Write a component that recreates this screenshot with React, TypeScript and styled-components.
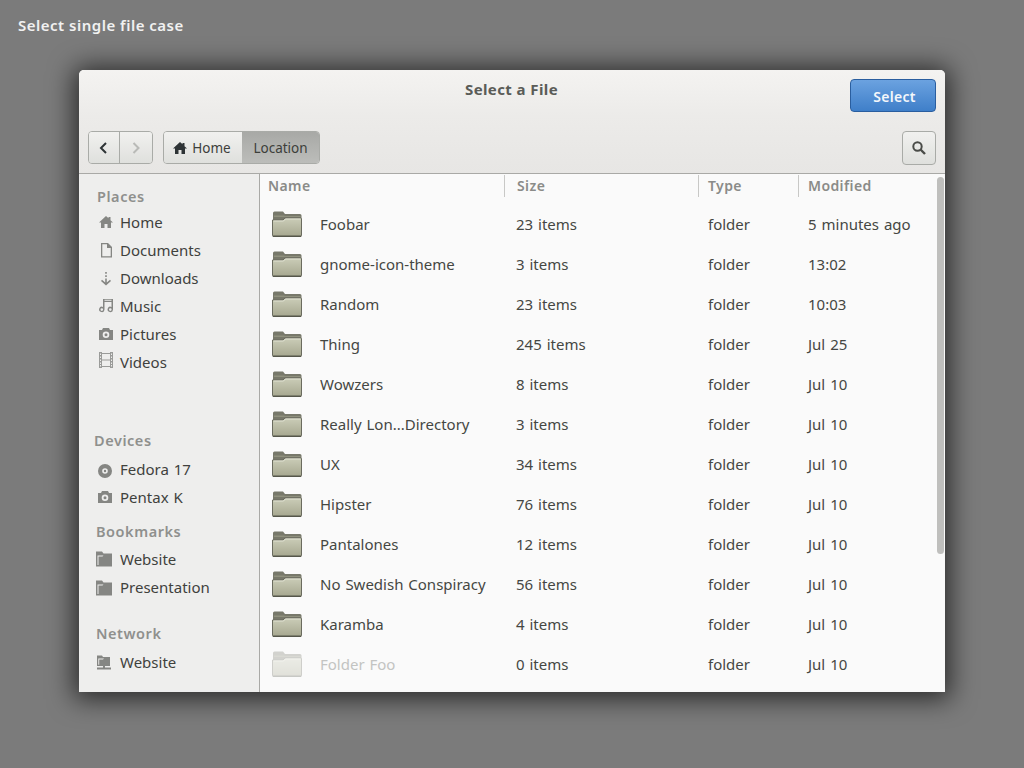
import React from "react";
import styled, { createGlobalStyle } from "styled-components";

const Global = createGlobalStyle`
  html, body { margin: 0; padding: 0; background: #7b7b7b; }
  body { font-family: "Noto Sans", "Open Sans", sans-serif; }
`;

const Page = styled.div`
  width: 1024px;
  height: 768px;
  overflow: hidden;
  background: #7b7b7b;
  box-sizing: border-box;
  padding: 14px 79px 0;
`;

const Caption = styled.div`
  margin-left: -61px;
  height: 56px;
  line-height: 22px;
  font-size: 15px;
  font-weight: 600;
  letter-spacing: 0.5px;
  color: #f1f1f1;
`;

const Window = styled.div`
  width: 866px;
  height: 622px;
  box-sizing: border-box;
  border-radius: 5px 5px 0 0;
  overflow: hidden;
  background: #fafafa;
  box-shadow: 0 2px 26px 5px rgba(0, 0, 0, 0.66), 0 0 0 1px rgba(125, 125, 125, 0.8);
  display: flex;
  flex-direction: column;
`;

const Header = styled.div`
  height: 104px;
  flex: none;
  box-sizing: border-box;
  border-bottom: 1px solid #a9a9a6;
  background: linear-gradient(#f4f3f1, #ecebe9 45%, #e7e6e4);
  display: flex;
  flex-direction: column;
  padding: 9px 9px 0;
`;

const TitleRow = styled.div`
  height: 52px;
  display: flex;
  justify-content: flex-end;
  position: relative;
`;

const Title = styled.div`
  position: absolute;
  left: 0;
  right: 0;
  top: -1px;
  text-align: center;
  font-size: 15px;
  line-height: 22px;
  font-weight: 700;
  letter-spacing: 0.4px;
  color: #5a5c58;
  padding-right: 1px;
`;

const SelectButton = styled.div`
  width: 86px;
  height: 33px;
  box-sizing: border-box;
  border: 1px solid #2a5e9f;
  border-radius: 4px;
  background: linear-gradient(#6ba2e0, #3f7fc9);
  color: #f4f7fb;
  font-size: 14px;
  font-weight: 600;
  letter-spacing: 0.3px;
  line-height: 33px;
  text-align: center;
  padding-left: 3px;
`;

const ToolRow = styled.div`
  display: flex;
  align-items: flex-start;
`;

const ButtonGroup = styled.div<{ $gap?: number }>`
  display: flex;
  height: 33px;
  box-sizing: border-box;
  border: 1px solid #a9aba7;
  border-radius: 4px;
  overflow: hidden;
  margin-right: ${(p) => p.$gap ?? 0}px;
`;

const ToolButton = styled.div<{ $w: number; $divider?: boolean }>`
  width: ${(p) => p.$w}px;
  height: 100%;
  display: flex;
  align-items: center;
  justify-content: center;
  background: linear-gradient(#f1f1ef, #dfe0dd);
  border-left: ${(p) => (p.$divider ? "1px solid #a9aba7" : "none")};
`;

const Crumb = styled.div<{ $active?: boolean; $w: number; $shift?: number }>`
  width: ${(p) => p.$w}px;
  height: 100%;
  box-sizing: border-box;
  display: flex;
  align-items: center;
  justify-content: center;
  gap: 4px;
  padding-right: ${(p) => p.$shift ?? 0}px;
  font-size: 13.5px;
  color: #3d3f3b;
  background: ${(p) =>
    p.$active
      ? "linear-gradient(#a8a9a6, #bcbdba)"
      : "linear-gradient(#f1f1ef, #dfe0dd)"};
`;

const Spacer = styled.div`
  flex: 1;
`;

const SearchButton = styled(ButtonGroup)`
  width: 34px;
  align-items: center;
  justify-content: center;
  background: linear-gradient(#f1f1ef, #dfe0dd);
  height: 34px;
`;

const Body = styled.div`
  flex: 1;
  display: flex;
  min-height: 0;
`;

const Sidebar = styled.div`
  width: 181px;
  flex: none;
  box-sizing: border-box;
  background: #eeeeed;
  border-right: 1px solid #a9a9a6;
  padding-top: 10px;
`;

const Section = styled.div<{ $top: number; $left: number }>`
  margin-top: ${(p) => p.$top}px;
  --heading-left: ${(p) => p.$left}px;
`;

const SideHeading = styled.div<{ $after?: number }>`
  height: 24px;
  line-height: 24px;
  margin-left: var(--heading-left);
  margin-bottom: ${(p) => p.$after ?? 0}px;
  font-size: 14.5px;
  font-weight: 600;
  letter-spacing: 0.55px;
  color: #8f908d;
`;

const SideItem = styled.div`
  height: 28px;
  display: flex;
  align-items: center;
  padding-left: 17px;
  font-size: 15px;
  word-spacing: 1px;
  color: #3f413d;
`;

const SideIconSlot = styled.div`
  width: 24px;
  height: 16px;
  flex: none;
`;

const SideIcon = styled.svg<{ $x: number; $y: number }>`
  display: block;
  width: 16px;
  height: 16px;
  margin-left: ${(p) => p.$x}px;
  margin-top: ${(p) => p.$y}px;
  fill: #858683;
`;

const Main = styled.div`
  flex: 1;
  position: relative;
  background: #fafafa;
  min-width: 0;
`;

const HeaderRow = styled.div`
  display: grid;
  grid-template-columns: 245px 194px 100px 1fr;
  height: 30px;
`;

const ColumnHead = styled.div<{ $pad: number; $line?: boolean }>`
  height: 22px;
  margin-top: 1px;
  line-height: 22px;
  box-sizing: border-box;
  padding-left: ${(p) => p.$pad}px;
  border-right: ${(p) => (p.$line ? "1px solid #c8c8c6" : "none")};
  font-size: 14px;
  font-weight: 600;
  letter-spacing: 0.4px;
  color: #8a8b88;
`;

const Row = styled.div`
  display: grid;
  grid-template-columns: 245px 194px 100px 1fr;
  height: 40px;
  align-items: center;
  font-size: 15px;
  word-spacing: 1px;
  color: #454743;
`;

const NameCell = styled.div<{ $faded?: boolean }>`
  display: flex;
  align-items: center;
  padding-left: 12px;
  color: ${(p) => (p.$faded ? "#c3c4c2" : "inherit")};
`;

const FolderIcon = styled.svg<{ $faded?: boolean }>`
  width: 30px;
  height: 27px;
  flex: none;
  margin-right: 18px;
  margin-top: 1px;
  opacity: ${(p) => (p.$faded ? 0.3 : 1)};
`;

const Cell = styled.div<{ $pad: number }>`
  padding-left: ${(p) => p.$pad}px;
`;

const Scrollbar = styled.div`
  position: absolute;
  top: 3px;
  right: 1px;
  width: 7px;
  height: 377px;
  border-radius: 4px;
  background: #bfbfbd;
`;

const Folder = ({ faded, id }: { faded?: boolean; id: string }) => (
  <FolderIcon $faded={faded} viewBox="0 0 30 27">
    <defs>
      <linearGradient id={id} x1="0" y1="0" x2="0" y2="1">
        <stop offset="0" stopColor="#cbcdb8" />
        <stop offset="1" stopColor="#a6a78f" />
      </linearGradient>
    </defs>
    <path d="M1 2 Q1 0.5 2.5 0.5 H11 L13 3 H28 Q29.5 3 29.5 4.5 V9 H1 Z" fill="#77786a" />
    <path d="M2 4.5 H12 L13 5 H28.5 V6 H2 Z" fill="#8f907d" />
    <path d="M0.5 9 H11 L13 7 H28.5 Q29.5 7 29.5 8 V24.5 Q29.5 25.5 28.5 25.5 H1.5 Q0.5 25.5 0.5 24.5 Z" fill={`url(#${id})`} stroke="#6a6b5e" strokeWidth="1" />
    <path d="M1 24.5 H29 V26 H1 Z" fill="#55564a" />
    <path d="M1.5 10 H11.5 L13.5 8 H28.5" stroke="#e0e1d2" strokeWidth="1" fill="none" />
  </FolderIcon>
);

const HOME_PATH = "M8 2 L1 8.5 H3 V14 H6.5 V10 H9.5 V14 H13 V8.5 H15 L12.5 6.2 V3 H10.5 V4.3 Z";

const icons: Record<string, React.ReactNode> = {
  home: <path d={HOME_PATH} />,
  doc: <path fillRule="evenodd" d="M3 1 H10 L14 5 V15.5 H3 Z M4.3 2.3 V14.2 H12.7 V6 H9 V2.3 Z" />,
  download: <path d="M7.2 1 H8.8 V2.8 H7.2 Z M7.2 4.2 H8.8 V6 H7.2 Z M7.2 7.4 H8.8 V11.6 L12 8.8 L13 10 L8 14.6 L3 10 L4 8.8 L7.2 11.6 Z" />,
  music: <path fillRule="evenodd" d="M5 2 H15 V12.5 A2.7 2.7 0 1 1 13.5 10 V5 H6.5 V12.5 A2.7 2.7 0 1 1 5 10 Z M3.8 11.3 A1.3 1.3 0 1 0 3.8 13.9 A1.3 1.3 0 1 0 3.8 11.3 Z M12.3 11.3 A1.3 1.3 0 1 0 12.3 13.9 A1.3 1.3 0 1 0 12.3 11.3 Z M6.5 2.8 V3.8 H13.5 V2.8 Z" />,
  camera: <path fillRule="evenodd" d="M5 2 H11 L12 4 H15 V14 H1 V4 H4 Z M8 5.5 A3.3 3.3 0 1 0 8 12.1 A3.3 3.3 0 1 0 8 5.5 Z M8 7.3 A1.5 1.5 0 1 1 8 10.3 A1.5 1.5 0 1 1 8 7.3 Z" />,
  film: <g opacity="0.8"><path fillRule="evenodd" d="M1 0 H4 V1 H12 V0 H15 V16 H12 V15 H4 V16 H1 Z M2 1.5 V3 H3 V1.5 Z M2 4.5 V6 H3 V4.5 Z M2 7.5 V9 H3 V7.5 Z M2 10.5 V12 H3 V10.5 Z M2 13 V14.5 H3 V13 Z M13 1.5 V3 H14 V1.5 Z M13 4.5 V6 H14 V4.5 Z M13 7.5 V9 H14 V7.5 Z M13 10.5 V12 H14 V10.5 Z M13 13 V14.5 H14 V13 Z M4 2 V7.4 H12 V2 Z M4 8.6 V14 H12 V8.6 Z" /></g>,
  disc: <path fillRule="evenodd" d="M8 1 A7 7 0 1 0 8 15 A7 7 0 1 0 8 1 Z M8 5.2 A2.8 2.8 0 1 1 8 10.8 A2.8 2.8 0 1 1 8 5.2 Z M8 6.8 A1.2 1.2 0 1 0 8 9.2 A1.2 1.2 0 1 0 8 6.8 Z" />,
  folder: <path fillRule="evenodd" d="M0 0.5 H6 L7.5 2.5 H16 V15.5 H0 Z M1.5 4.5 V14 H2.5 V5.5 H6.5 L7.5 4.5 Z" />,
  network: <path fillRule="evenodd" d="M1 0.5 H6 L7 2 H14 V11 H9 V12.5 H15 V14.5 H1 V12.5 H7 V11 H1 Z M2.3 3.5 V9.8 H3.2 V4.6 H7 L8 3.5 Z" />,
};

type Place = [string, string, number, number];

const places: Place[] = [
  ["home", "Home", 2, 0],
  ["doc", "Documents", 2, 0],
  ["download", "Downloads", 2, 1],
  ["music", "Music", 2, -1],
  ["camera", "Pictures", 2, 0],
  ["film", "Videos", 2, -2],
];
const devices: Place[] = [["disc", "Fedora 17", 1, 2], ["camera", "Pentax K", 1, 0]];
const bookmarks: Place[] = [["folder", "Website", 0, 0], ["folder", "Presentation", 0, 1]];
const network: Place[] = [["network", "Website", 0, 1]];

const rows = [
  ["Foobar", "23 items", "5 minutes ago"],
  ["gnome-icon-theme", "3 items", "13:02"],
  ["Random", "23 items", "10:03"],
  ["Thing", "245 items", "Jul 25"],
  ["Wowzers", "8 items", "Jul 10"],
  ["Really Lon...Directory", "3 items", "Jul 10"],
  ["UX", "34 items", "Jul 10"],
  ["Hipster", "76 items", "Jul 10"],
  ["Pantalones", "12 items", "Jul 10"],
  ["No Swedish Conspiracy", "56 items", "Jul 10"],
  ["Karamba", "4 items", "Jul 10"],
  ["Folder Foo", "0 items", "Jul 10"],
];

const items = (list: Place[]) =>
  list.map(([icon, label, x, y]) => (
    <SideItem key={label}>
      <SideIconSlot>
        <SideIcon viewBox="0 0 16 16" $x={x} $y={y}>{icons[icon]}</SideIcon>
      </SideIconSlot>
      {label}
    </SideItem>
  ));

export default function App() {
  return (
    <Page>
      <Global />
      <Caption>Select single file case</Caption>
      <Window>
        <Header>
          <TitleRow>
            <Title>Select a File</Title>
            <SelectButton>Select</SelectButton>
          </TitleRow>
          <ToolRow>
            <ButtonGroup $gap={10}>
              <ToolButton $w={30}>
                <svg width="12" height="14" viewBox="0 0 12 14">
                  <path d="M8 2 L3 7 L8 12" fill="none" stroke="#2e3436" strokeWidth="2" />
                </svg>
              </ToolButton>
              <ToolButton $w={32} $divider>
                <svg width="12" height="14" viewBox="0 0 12 14">
                  <path d="M3.5 2 L8.5 7 L3.5 12" fill="none" stroke="#b9bab7" strokeWidth="2" />
                </svg>
              </ToolButton>
            </ButtonGroup>
            <ButtonGroup>
              <Crumb $w={78} $shift={3}>
                <svg width="16" height="16" viewBox="0 0 16 16" fill="#2e3436">
                  <path d={HOME_PATH} />
                </svg>
                Home
              </Crumb>
              <Crumb $w={77} $active>Location</Crumb>
            </ButtonGroup>
            <Spacer />
            <SearchButton>
              <svg width="16" height="16" viewBox="0 0 16 16">
                <circle cx="6.5" cy="6.5" r="4.2" fill="none" stroke="#4a4c48" strokeWidth="2" />
                <path d="M9.5 9.5 L14 14" stroke="#4a4c48" strokeWidth="2.4" />
              </svg>
            </SearchButton>
          </ToolRow>
        </Header>
        <Body>
          <Sidebar>
            <Section $top={0} $left={18}>
              <SideHeading>Places</SideHeading>
              {items(places)}
            </Section>
            <Section $top={52} $left={15}>
              <SideHeading $after={3}>Devices</SideHeading>
              {items(devices)}
            </Section>
            <Section $top={8} $left={17}>
              <SideHeading $after={2}>Bookmarks</SideHeading>
              {items(bookmarks)}
            </Section>
            <Section $top={20} $left={17}>
              <SideHeading $after={3}>Network</SideHeading>
              {items(network)}
            </Section>
          </Sidebar>
          <Main>
            <HeaderRow>
              <ColumnHead $pad={8} $line>Name</ColumnHead>
              <ColumnHead $pad={12} $line>Size</ColumnHead>
              <ColumnHead $pad={9} $line>Type</ColumnHead>
              <ColumnHead $pad={9}>Modified</ColumnHead>
            </HeaderRow>
            {rows.map(([name, size, date], i) => (
              <Row key={name}>
                <NameCell $faded={i === 11}>
                  <Folder id={`f${i}`} faded={i === 11} />
                  {name}
                </NameCell>
                <Cell $pad={11}>{size}</Cell>
                <Cell $pad={9}>folder</Cell>
                <Cell $pad={9}>{date}</Cell>
              </Row>
            ))}
            <Scrollbar />
          </Main>
        </Body>
      </Window>
    </Page>
  );
}
